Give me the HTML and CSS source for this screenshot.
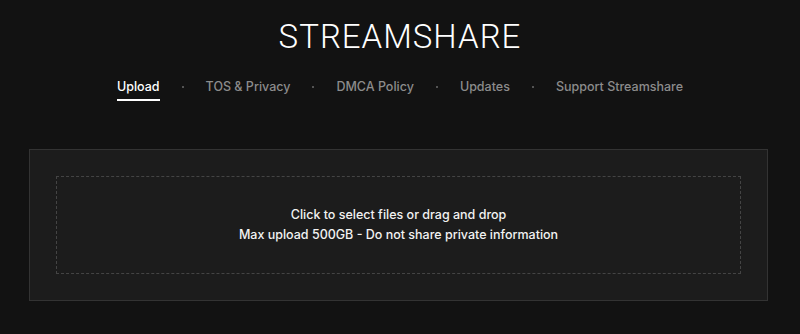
FILE: index.html
```html
<!DOCTYPE html>
<html>
<head>
<meta charset="utf-8">
<link rel="stylesheet" href="styles.css">
</head>
<body>
<header class="header">
  <h1 class="title">STREAMSHARE</h1>
  <nav class="nav">
    <a class="nav-item active">Upload</a>
    <span class="dot"></span>
    <a class="nav-item">TOS &amp; Privacy</a>
    <span class="dot"></span>
    <a class="nav-item">DMCA Policy</a>
    <span class="dot"></span>
    <a class="nav-item">Updates</a>
    <span class="dot"></span>
    <a class="nav-item">Support Streamshare</a>
  </nav>
</header>
<main class="main">
  <section class="panel">
    <div class="dropzone">
      <p class="drop-line">Click to select files or drag and drop</p>
      <p class="drop-line">Max upload 500GB - Do not share private information</p>
    </div>
  </section>
</main>
</body>
</html>
```
FILE: styles.css
```css
html, body {
  margin: 0;
  padding: 0;
  background: #121212;
  color: #fff;
  font-family: "Inter", "Liberation Sans", sans-serif;
}
.header {
  display: flex;
  flex-direction: column;
  align-items: center;
  padding-top: 17px;
}
.title {
  margin: 0;
  font-family: "Roboto", "Liberation Sans", sans-serif;
  font-weight: 300;
  font-size: 33px;
  line-height: 40px;
  letter-spacing: 1px;
  color: #fff;
}
.nav {
  display: flex;
  align-items: flex-start;
  gap: 22px;
  margin-top: 22px;
  font-size: 12.5px;
  font-weight: 500;
}
.nav-item {
  color: #8c8c8c;
  line-height: 16px;
  padding-bottom: 4px;
  border-bottom: 2px solid transparent;
}
.nav-item.active {
  color: #fff;
  border-bottom-color: #fff;
}
.dot {
  width: 2px;
  height: 2px;
  margin-top: 7px;
  border-radius: 50%;
  background: #6a6a6a;
}
.main {
  padding: 48px 32px 0 29px;
}
.panel {
  background: #1c1c1c;
  border: 1px solid #333;
  padding: 26px;
}
.dropzone {
  height: 96px;
  border: 1px dashed #444;
  display: flex;
  flex-direction: column;
  justify-content: center;
  align-items: center;
  gap: 4px;
}
.drop-line {
  margin: 0;
  font-size: 12.5px;
  font-weight: 500;
  line-height: 16px;
  color: #f2f2f2;
}
```
